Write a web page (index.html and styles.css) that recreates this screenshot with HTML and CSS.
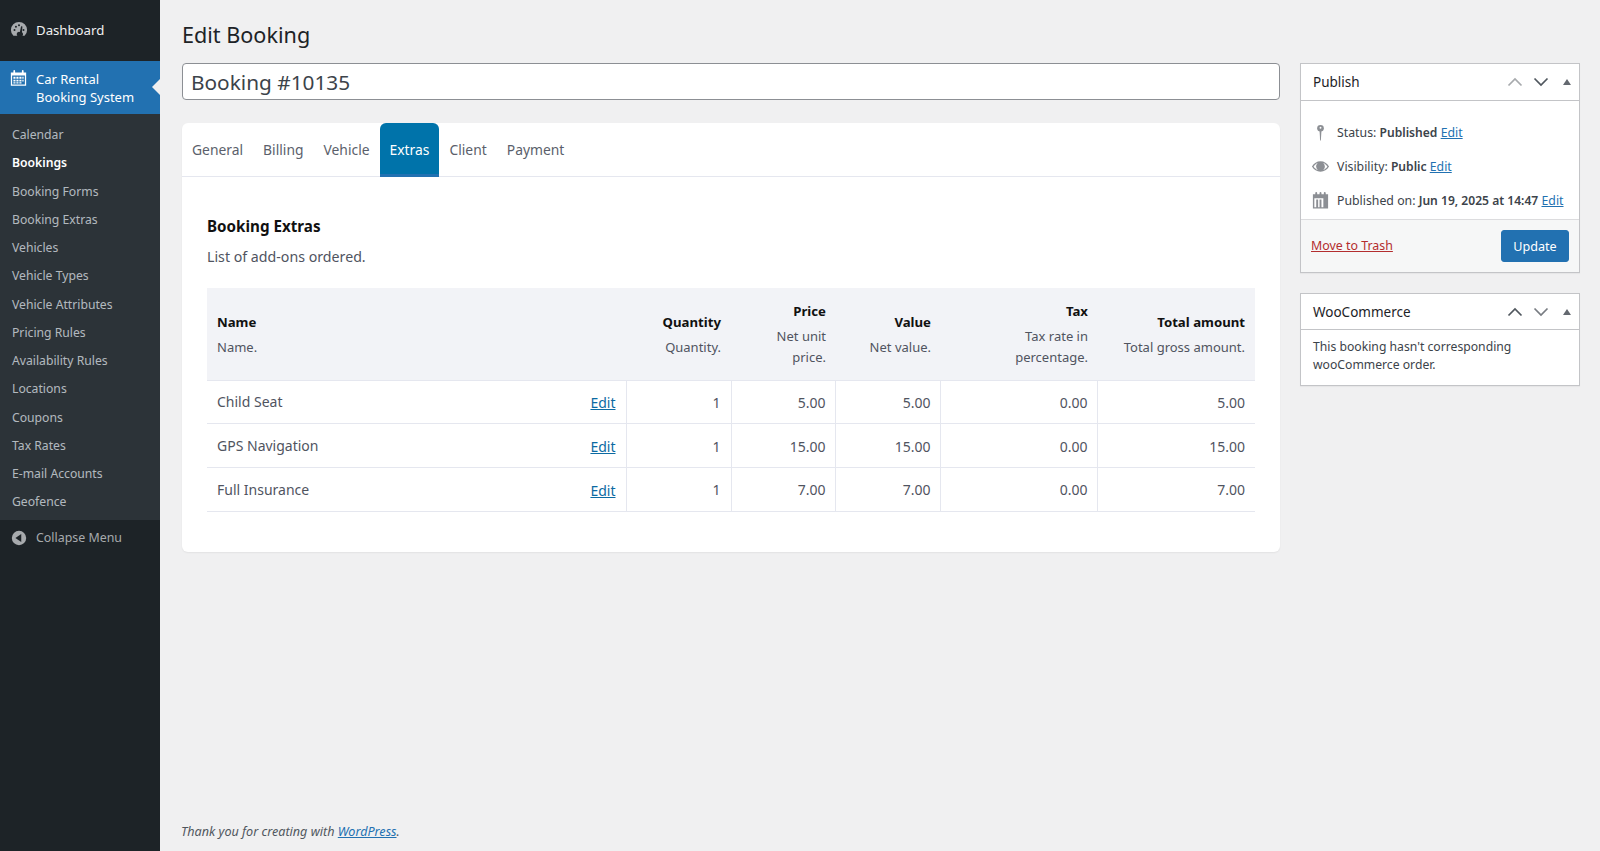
FILE: index.html
```html
<!DOCTYPE html>
<html lang="en">
<head>
<meta charset="utf-8">
<title>Edit Booking</title>
<link rel="stylesheet" href="styles.css">
</head>
<body>
<div class="layout">
  <nav class="sidebar">
    <a class="menu-top">
      <svg class="menu-icon" viewBox="0 0 20 20"><path fill="#a7aaad" d="M3.800 16.400A8.800 8.800 0 0 1 1 10a9 9 0 0 1 18 0 8.800 8.800 0 0 1-2.800 6.400H13.800c.5-.5.700-1.100.700-1.700 0-.9-.5-1.600-1.200-2.100L13.800 6l-1.500-.3-1.300 6.600A2.500 2.500 0 0 0 7.500 14.700c0 .6.200 1.200.7 1.700Z"/><circle cx="5" cy="10" r="1.100" fill="#1d2327"/><circle cx="6.600" cy="6.400" r="1.100" fill="#1d2327"/><circle cx="10" cy="4.800" r="1.100" fill="#1d2327"/><circle cx="15" cy="10" r="1.100" fill="#1d2327"/></svg>
      <span>Dashboard</span>
    </a>
    <a class="menu-active">
      <svg class="menu-icon cal" viewBox="0 0 20 20"><path fill="#fff" fill-rule="evenodd" d="M1 3.500h3V1.500a1 1 0 0 1 2 0v2h8v-2a1 1 0 0 1 2 0v2h3V19H1ZM2.500 7v10.500h15V7ZM4 8.500h2.500V11H4Zm3.500 0H10V11H7.500Zm3.500 0h2.500V11H11Zm3.500 0H16V11h-1.500ZM4 12h2.500v2H4Zm3.500 0H10v2H7.500Zm3.500 0h2.500v2H11Zm3.500 0H16v2h-1.500ZM4 15h2.500v1.500H4Zm3.500 0H10v1.500H7.500Zm3.500 0h2.500v1.500H11Z"/></svg>
      <span>Car Rental<br>Booking System</span>
    </a>
    <ul class="submenu">
      <li>Calendar</li>
      <li class="current">Bookings</li>
      <li>Booking Forms</li>
      <li>Booking Extras</li>
      <li>Vehicles</li>
      <li>Vehicle Types</li>
      <li>Vehicle Attributes</li>
      <li>Pricing Rules</li>
      <li>Availability Rules</li>
      <li>Locations</li>
      <li>Coupons</li>
      <li>Tax Rates</li>
      <li>E-mail Accounts</li>
      <li>Geofence</li>
    </ul>
    <a class="collapse">
      <svg class="menu-icon" viewBox="0 0 20 20"><circle cx="10" cy="10" r="8" fill="#a7aaad"/><path fill="#1d2327" d="M12.500 5.500v9L6 10Z"/></svg>
      <span>Collapse Menu</span>
    </a>
  </nav>

  <main class="content">
    <h1>Edit Booking</h1>
    <div class="columns">
      <div class="primary">
        <input class="title-input" type="text" value="Booking #10135">
        <section class="card">
          <div class="tabs">
            <span class="tab">General</span>
            <span class="tab">Billing</span>
            <span class="tab">Vehicle</span>
            <span class="tab active">Extras</span>
            <span class="tab">Client</span>
            <span class="tab">Payment</span>
          </div>
          <div class="panel">
            <h2>Booking Extras</h2>
            <p class="lead">List of add-ons ordered.</p>
            <table>
              <colgroup>
                <col class="c-name"><col class="c-qty"><col class="c-price"><col class="c-value"><col class="c-tax"><col class="c-total">
              </colgroup>
              <thead>
                <tr>
                  <th class="left"><b>Name</b><small>Name.</small></th>
                  <th><b>Quantity</b><small>Quantity.</small></th>
                  <th><b>Price</b><small>Net unit price.</small></th>
                  <th><b>Value</b><small>Net value.</small></th>
                  <th><b>Tax</b><small>Tax rate in percentage.</small></th>
                  <th><b>Total amount</b><small>Total gross amount.</small></th>
                </tr>
              </thead>
              <tbody>
                <tr>
                  <td class="left"><div class="name-cell"><span>Child Seat</span><a href="#">Edit</a></div></td>
                  <td>1</td><td>5.00</td><td>5.00</td><td>0.00</td><td>5.00</td>
                </tr>
                <tr>
                  <td class="left"><div class="name-cell"><span>GPS Navigation</span><a href="#">Edit</a></div></td>
                  <td>1</td><td>15.00</td><td>15.00</td><td>0.00</td><td>15.00</td>
                </tr>
                <tr>
                  <td class="left"><div class="name-cell"><span>Full Insurance</span><a href="#">Edit</a></div></td>
                  <td>1</td><td>7.00</td><td>7.00</td><td>0.00</td><td>7.00</td>
                </tr>
              </tbody>
            </table>
          </div>
        </section>
      </div>

      <aside class="side">
        <section class="box">
          <header class="box-head">
            <h3>Publish</h3>
            <div class="box-ctrl">
              <svg class="faded" viewBox="0 0 16 10"><path d="M1.500 8.500 8 2l6.500 6.500"/></svg>
              <svg viewBox="0 0 16 10"><path d="M1.500 1.500 8 8l6.500-6.500"/></svg>
              <span class="tri"></span>
            </div>
          </header>
          <div class="pub-rows">
            <div class="pub-row">
              <svg class="pub-icon" viewBox="0 0 20 20"><circle cx="10" cy="5.500" r="3.500" fill="#8c8f94"/><circle cx="10" cy="5" r="1" fill="#fff"/><path d="M9 8h2l-.6 10.500h-.8Z" fill="#8c8f94"/></svg>
              <span>Status: <b>Published</b> <a href="#">Edit</a></span>
            </div>
            <div class="pub-row">
              <svg class="pub-icon" viewBox="0 0 20 20"><path fill="#8c8f94" fill-rule="evenodd" d="M1 10c2-3.400 5.200-5.500 9-5.500s7 2.100 9 5.500c-2 3.400-5.200 5.500-9 5.500S3 13.400 1 10Zm1.700 0c1.100 1.700 2.600 3 4.500 3.700A5 5 0 0 1 5.400 10c0-1.500.700-2.800 1.800-3.700-1.900.7-3.400 2-4.500 3.700Zm10.100-3.700A4.800 4.800 0 0 1 14.600 10c0 1.500-.7 2.800-1.800 3.700 1.900-.7 3.400-2 4.500-3.700-1.100-1.700-2.600-3-4.500-3.700Z"/><circle cx="10" cy="9.500" r="3.500" fill="#8c8f94"/></svg>
              <span>Visibility: <b>Public</b> <a href="#">Edit</a></span>
            </div>
            <div class="pub-row">
              <svg class="pub-icon" viewBox="0 0 20 20"><path fill="#8c8f94" fill-rule="evenodd" d="M2 3.500h2.500V2a1 1 0 0 1 2 0v1.500h2.500V2a1 1 0 0 1 2 0v1.500h2.500V2a1 1 0 0 1 2 0v1.500H18V18.500H2ZM3.500 7.500v9.500h2V9h2v8h1.500V9h2v8h2V7.500Z"/></svg>
              <span>Published on: <b>Jun 19, 2025 at 14:47</b> <a href="#">Edit</a></span>
            </div>
          </div>
          <footer class="box-foot">
            <a class="trash" href="#">Move to Trash</a>
            <button class="update" type="button">Update</button>
          </footer>
        </section>
        <section class="box">
          <header class="box-head woo">
            <h3>WooCommerce</h3>
            <div class="box-ctrl">
              <svg viewBox="0 0 16 10"><path d="M1.500 8.500 8 2l6.500 6.500"/></svg>
              <svg class="soft" viewBox="0 0 16 10"><path d="M1.500 1.500 8 8l6.500-6.500"/></svg>
              <span class="tri"></span>
            </div>
          </header>
          <p class="woo-text">This booking hasn't corresponding wooCommerce order.</p>
        </section>
      </aside>
    </div>
    <footer class="page-foot">Thank you for creating with <a href="#">WordPress</a>.</footer>
  </main>
</div>
</body>
</html>
```
FILE: styles.css
```css
* { box-sizing: border-box; }
html, body { margin: 0; height: 100%; }
body {
  background: #f0f0f1;
  color: #3c434a;
  font-family: "Noto Sans", "Open Sans", sans-serif;
  font-size: 13px;
  overflow: hidden;
}
a { color: #2271b1; }
.layout { display: flex; height: 851px; }

.sidebar { width: 160px; flex: none; background: #1d2327; color: #f0f0f1; }
.menu-top { display: flex; align-items: center; height: 61px; padding: 0 0 1px 10px; gap: 8px; color: #f0f0f1; font-size: 13.200px; }
.menu-icon { width: 18px; height: 18px; flex: none; }
.menu-active {
  position: relative; display: flex; height: 53px; padding: 9px 10px 0 10px; gap: 9px;
  background: #2271b1; color: #fff; line-height: 18px;
}
.menu-active::after {
  content: ""; position: absolute; right: 0; top: 18px;
  border: 8px solid transparent; border-right-color: #f0f0f1; border-left-width: 0;
}
.cal { width: 17px; height: 18px; margin-top: -1px; }
.submenu {
  list-style: none; margin: 0; padding: 7px 0 3px; background: #2c3338;
  color: rgba(240, 246, 252, .7); font-size: 12.200px;
}
.submenu li { height: 28.250px; line-height: 28.250px; padding-left: 12px; }
.submenu .current { color: #fff; font-weight: 600; }
.collapse { display: flex; align-items: center; height: 36px; padding: 0 0 0 10px; gap: 8px; color: #a7aaad; font-size: 12.400px; }

.content { flex: 1; min-width: 0; display: flex; flex-direction: column; padding: 0 20px 0 22px; }
h1 { margin: 0; height: 63px; padding-top: 19px; font-size: 21.600px; line-height: 32px; font-weight: 400; color: #1d2327; }
.columns { display: grid; grid-template-columns: 1098px 280px; gap: 20px; }

.title-input {
  display: block; width: 100%; height: 37px; padding: 1px 8px 0; border: 1px solid #8c8f94; border-radius: 4px;
  background: #fff; color: #3c434a; font: inherit; font-size: 20.800px;
}
.card { margin-top: 23px; height: 429px; background: #fff; border-radius: 6px; box-shadow: 0 1px 2px rgba(0,0,0,.06); overflow: hidden; }
.tabs { display: flex; height: 54px; border-bottom: 1px solid #e5e7ef; }
.tab { display: flex; align-items: center; padding: 0 10px; font-size: 13.870px; color: #5b5f6b; }
.tab.active { background: #0073aa; color: #fff; border-radius: 6px 6px 0 0; border-bottom: 3px solid #2271b1; height: 54px; padding-top: 2px; }
.panel { padding: 39px 25px 0; }
h2 { margin: 0; font-size: 15.200px; line-height: 20px; font-weight: 700; color: #111; }
.lead { margin: 11px 0 21px; font-size: 14.200px; line-height: 20px; color: #50545f; }

table { width: 1048px; table-layout: fixed; border-collapse: collapse; font-size: 14px; color: #50545f; }
.c-name { width: 419px; } .c-qty { width: 105px; } .c-price { width: 104px; } .c-value { width: 105px; } .c-tax { width: 157px; } .c-total { width: 158px; }
th { padding: 11px 10px 9px; background: #f2f3f7; text-align: right; font-weight: 400; height: 92px; border-bottom: 1px solid #e5e7ef; }
th b { display: block; color: #111; font-size: 13.200px; line-height: 20px; font-weight: 700; }
th small { display: block; margin-top: 5px; font-size: 13px; line-height: 21px; color: #50545f; }
td { height: 43.700px; padding: 1px 10px 0; text-align: right; border: 1px solid #e5e7ef; border-width: 0 1px 1px 0; }
td:last-child { border-right: 0; }
th:nth-child(3), th:nth-child(4), th:nth-child(5), td:nth-child(3), td:nth-child(4), td:nth-child(5) { padding-right: 9px; }
.left { text-align: left; }
.name-cell { display: flex; justify-content: space-between; }
.name-cell a { color: #0b6aa2; padding-top: 1px; }

.box { background: #fff; border: 1px solid #c3c4c7; box-shadow: 0 1px 1px rgba(0,0,0,.04); margin-bottom: 20px; }
.box-head { display: flex; align-items: center; justify-content: space-between; height: 37px; padding: 0 8px 0 12px; border-bottom: 1px solid #c3c4c7; }
.box-head.woo { height: 36px; }
h3 { margin: 0; font-size: 13.500px; font-weight: 400; color: #1d2327; }
.box-ctrl { display: flex; align-items: center; gap: 10px; }
.box-ctrl svg { width: 16px; height: 10px; fill: none; stroke: #50575e; stroke-width: 1.700; }
.box-ctrl svg.faded { stroke: #a7aaad; }
.box-ctrl svg.soft { stroke: #787c82; }
.tri { width: 0; height: 0; margin-left: 4px; border: 4px solid transparent; border-top: 0; border-bottom: 6px solid #646970; }
.pub-rows { padding: 14px 10px 6px; height: 118px; }
.pub-row { display: flex; align-items: center; gap: 7px; height: 34px; font-size: 12.300px; color: #3c434a; white-space: nowrap; }
.pub-row b { font-weight: 600; font-size: 12.100px; }
.pub-icon { width: 19px; height: 19px; flex: none; }
.box-foot { display: flex; align-items: center; justify-content: space-between; height: 53px; padding: 0 10px 2px; background: #f6f7f7; border-top: 1px solid #dcdcde; }
.trash { color: #b32d2e; font-size: 12.400px; }
.update { width: 68px; height: 32px; margin-top: 2px; border: 1px solid #2271b1; border-radius: 3px; background: #2271b1; color: #fff; font: inherit; font-size: 12.600px; }
.woo-text { margin: 0; padding: 8px 12px 12px; font-size: 12.200px; line-height: 18px; height: 55px; }

.page-foot { margin-top: auto; margin-left: -1px; padding-bottom: 10px; font-size: 12.600px; font-style: italic; line-height: 18px; color: #50575e; }
```
